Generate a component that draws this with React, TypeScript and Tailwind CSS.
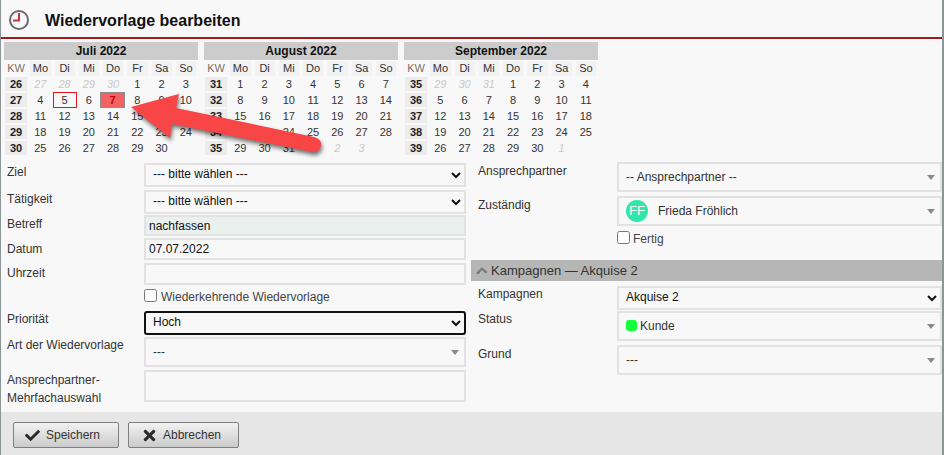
import { FaCheck, FaTimes } from "react-icons/fa";

const months = [
  {
    title: "Juli 2022",
    weeks: [
      ["26", "~27", "~28", "~29", "~30", "1", "2", "3"],
      ["27", "4", "5", "6", "7", "8", "9", "10"],
      ["28", "11", "12", "13", "14", "15", "16", "17"],
      ["29", "18", "19", "20", "21", "22", "23", "24"],
      ["30", "25", "26", "27", "28", "29", "30", ""],
    ],
  },
  {
    title: "August 2022",
    weeks: [
      ["31", "1", "2", "3", "4", "5", "6", "7"],
      ["32", "8", "9", "10", "11", "12", "13", "14"],
      ["33", "15", "16", "17", "18", "19", "20", "21"],
      ["34", "22", "23", "24", "25", "26", "27", "28"],
      ["35", "29", "30", "31", "~1", "~2", "~3", ""],
    ],
  },
  {
    title: "September 2022",
    weeks: [
      ["35", "~29", "~30", "~31", "1", "2", "3", "4"],
      ["36", "5", "6", "7", "8", "9", "10", "11"],
      ["37", "12", "13", "14", "15", "16", "17", "18"],
      ["38", "19", "20", "21", "22", "23", "24", "25"],
      ["39", "26", "27", "28", "29", "30", "~1", ""],
    ],
  },
];

const dayNames = ["Mo", "Di", "Mi", "Do", "Fr", "Sa", "So"];

const Month = ({ title, weeks, first }: { title: string; weeks: string[][]; first?: boolean }) => (
  <div className="w-[194px]">
    <div className="h-[18px] bg-[#cccccc] text-center text-xs font-bold leading-[18px] text-[#111]">{title}</div>
    <div className="mt-px grid grid-cols-8 text-[11px] leading-[15px] text-[#333]">
      <div className="mx-px h-[15px] text-center text-[#7b6f66]">KW</div>
      {dayNames.map((d) => (
        <div key={d} className="mx-[2px] h-[15px] bg-[#f2f2f2] text-center">
          {d}
        </div>
      ))}
      {weeks.map((week, w) =>
        week.map((day, i) => {
          if (i === 0) {
            return (
              <div key={i} className="mx-px my-px h-[14px] bg-[#ececec] text-center font-bold leading-[14px] text-[#222]">
                {day}
              </div>
            );
          }
          if (first && w === 1 && day === "5") {
            return (
              <div key={i} className="flex h-4 items-center justify-center border border-[#e8141c]">
                {day}
              </div>
            );
          }
          if (first && w === 1 && day === "7") {
            return (
              <div key={i} className="-ml-px flex h-4 items-center justify-center border border-[#8d8d8d] bg-[#f26262] font-bold text-[#c4000c]">
                {day}
              </div>
            );
          }
          if (day.startsWith("~")) {
            return (
              <div key={i} className="h-4 text-center italic leading-4 text-[#c8c8c8]">
                {day.slice(1)}
              </div>
            );
          }
          return (
            <div key={i} className="h-4 text-center leading-4">
              {day}
            </div>
          );
        })
      )}
    </div>
  </div>
);

const NativeSelect = ({ value, focused }: { value: string; focused?: boolean }) => (
  <select
    defaultValue={value}
    className={
      focused
        ? "h-6 w-full rounded-[3px] border-2 border-[#111] bg-[#f8f8f8] pb-px pl-[3px] text-xs text-[#111]"
        : "h-6 w-full border-2 border-[#e2e2e2] bg-[#f8f8f8] pb-px pl-[3px] text-xs text-[#111]"
    }
  >
    <option>{value}</option>
  </select>
);

const Fake = ({ children }: { children?: React.ReactNode }) => (
  <div className="flex h-[30px] w-full items-center border-2 border-[#e2e2e2] pl-[7px] pr-[5px] text-xs text-[#333]">
    <div className="flex flex-1 items-center">{children}</div>
    <div className="h-0 w-0 border-x-[4px] border-t-[5px] border-x-transparent border-t-[#8a8a8a]" />
  </div>
);

const Lbl = ({ children, className }: { children: React.ReactNode; className?: string }) => (
  <div className={`text-xs leading-[18px] text-[#333] ${className ?? ""}`}>{children}</div>
);

export default function App() {
  return (
    <div className="relative flex h-[455px] w-[944px] flex-col overflow-hidden border-l border-r-2 border-[#8c9696] bg-[#f8f8f8] font-['Liberation_Sans',Arial,sans-serif]">
      {/* titel */}
      <div className="flex h-[39px] shrink-0 items-center border-b-2 border-[#a01c1c] pl-[7px] pt-[5px]">
        <svg width="22" height="22" viewBox="0 0 22 22" fill="none" className="-mt-[3px]">
          <circle cx="11" cy="11" r="9" stroke="#6a6a6a" strokeWidth="2" />
          <path d="M11 4V11.5H5" stroke="#c8343c" strokeWidth="2" />
        </svg>
        <div className="ml-[15px] text-base font-bold text-[#111]">Wiedervorlage bearbeiten</div>
      </div>

      {/* kalender */}
      <div className="flex shrink-0 gap-[6px] pl-[3px] pt-[3px]">
        {months.map((m, i) => (
          <Month key={m.title} title={m.title} weeks={m.weeks} first={i === 0} />
        ))}
      </div>

      {/* formular */}
      <div className="flex flex-1 pt-[5px]">
        <div className="w-[470px] pl-[6px]">
          <div className="flex h-6">
            <Lbl className="w-[137px] pt-[2px]">Ziel</Lbl>
            <div className="w-[322px]"><NativeSelect value="--- bitte wählen ---" /></div>
          </div>
          <div className="mt-[3px] flex h-6">
            <Lbl className="w-[137px] pt-[2px]">Tätigkeit</Lbl>
            <div className="w-[322px]"><NativeSelect value="--- bitte wählen ---" /></div>
          </div>
          <div className="mt-[3px] flex h-[21px]">
            <Lbl className="w-[137px]">Betreff</Lbl>
            <div className="flex h-[21px] w-[322px] items-center border-2 border-[#e2e2e2] bg-[#e9f0ee] pl-[3px] text-xs text-[#111]">nachfassen</div>
          </div>
          <div className="mt-[2px] flex h-[22px]">
            <Lbl className="w-[137px] pt-[2px]">Datum</Lbl>
            <div className="flex h-[22px] w-[322px] items-center border-2 border-[#e2e2e2] pl-[3px] text-xs text-[#111]">07.07.2022</div>
          </div>
          <div className="mt-[3px] flex h-[22px]">
            <Lbl className="w-[137px] pt-px">Uhrzeit</Lbl>
            <div className="h-[22px] w-[322px] border-2 border-[#e2e2e2]" />
          </div>
          <div className="flex h-[20px] items-center pl-[137px]">
            <input type="checkbox" className="h-[13px] w-[13px]" />
            <span className="ml-[4px] mt-[3px] text-xs text-[#444]">Wiederkehrende Wiedervorlage</span>
          </div>
          <div className="mt-1 flex h-[24px]">
            <Lbl className="w-[137px] pt-px">Priorität</Lbl>
            <div className="w-[322px]"><NativeSelect value="Hoch" focused /></div>
          </div>
          <div className="mt-1 flex h-[29px]">
            <Lbl className="-mt-px w-[137px]">Art der Wiedervorlage</Lbl>
            <div className="w-[322px]"><Fake>---</Fake></div>
          </div>
          <div className="mt-1 flex h-8">
            <Lbl className="w-[137px] pt-px">Ansprechpartner-<br />Mehrfachauswahl</Lbl>
            <div className="h-8 w-[322px] border-2 border-[#e2e2e2]" />
          </div>
        </div>

        <div className="flex-1 pt-px">
          <div className="flex h-[30px] pl-[7px]">
            <Lbl className="w-[139px]">Ansprechpartner</Lbl>
            <div className="w-[325px]"><Fake>-- Ansprechpartner --</Fake></div>
          </div>
          <div className="mt-1 flex h-[30px] pl-[7px]">
            <Lbl className="w-[139px]">Zuständig</Lbl>
            <div className="w-[325px]">
              <Fake>
                <span className="flex h-[22px] w-[22px] items-center justify-center rounded-full bg-[#2fe6ad] text-[13px] text-white">FF</span>
                <span className="ml-[10px]">Frieda Fröhlich</span>
              </Fake>
            </div>
          </div>
          <div className="flex h-[22px] items-center pl-[146px]">
            <input type="checkbox" className="h-[13px] w-[13px]" />
            <span className="ml-[3px] mt-[3px] text-xs text-[#444]">Fertig</span>
          </div>
          <div className="mt-[12px] flex h-[21px] items-center bg-[#b6b6b6] pl-[5px] text-[13px] text-[#333]">
            <svg width="12" height="8" viewBox="0 0 12 8" fill="#7c7c7c">
              <path d="M0 6 L3 3 L5 1 Q6 0 7 1 L9 3 Q12 4 11 6 L9 6 L7 4 Q6 3 5 4 L3 7 L1 7 Z" />
            </svg>
            <span className="ml-[3px]">Kampagnen — Akquise 2</span>
          </div>
          <div className="mt-[3px] flex h-6 pl-[7px]">
            <Lbl className="w-[139px] pt-px">Kampagnen</Lbl>
            <div className="w-[325px]"><NativeSelect value="Akquise 2" /></div>
          </div>
          <div className="mt-[3px] flex h-[30px] pl-[7px]">
            <Lbl className="-mt-px w-[139px]">Status</Lbl>
            <div className="w-[325px]">
              <Fake>
                <span className="-mt-[2px] h-[11px] w-[11px] rounded-[3px] bg-[#14ff3c]" />
                <span className="ml-[3px]">Kunde</span>
              </Fake>
            </div>
          </div>
          <div className="mt-1 flex h-[30px] pl-[7px]">
            <Lbl className="w-[139px]">Grund</Lbl>
            <div className="w-[325px]"><Fake>---</Fake></div>
          </div>
        </div>
      </div>

      {/* fusszeile */}
      <div className="flex h-[43px] shrink-0 items-start gap-[9px] bg-[#e6e6e6] pl-3 pt-[10px]">
        <button className="flex h-[26px] w-[106px] items-center rounded-[2px] border border-[#7f7f7f] bg-gradient-to-b from-[#f2f2f2] to-[#cbcbcb] pl-[11px] text-xs text-[#333]">
          <FaCheck size={15} className="text-[#2a2a2a]" />
          <span className="ml-[6px]">Speichern</span>
        </button>
        <button className="flex h-[26px] w-[111px] items-center rounded-[2px] border border-[#7f7f7f] bg-gradient-to-b from-[#f2f2f2] to-[#cbcbcb] pl-[12px] text-xs text-[#333]">
          <FaTimes size={17} className="text-[#2a2a2a]" />
          <span className="ml-[5px]">Abbrechen</span>
        </button>
      </div>

      {/* pfeil */}
      <svg
        width="944"
        height="455"
        viewBox="0 0 944 455"
        className="absolute -left-px top-0 drop-shadow-[1px_3px_2px_rgba(0,0,0,0.55)]"
      >
        <path
          d="M131 107 L179 94 L176 108 L314 137 Q322 139 321 146 Q319 153 312 152 L172 124 L170 138 Z"
          fill="#f84545"
        />
      </svg>
    </div>
  );
}
